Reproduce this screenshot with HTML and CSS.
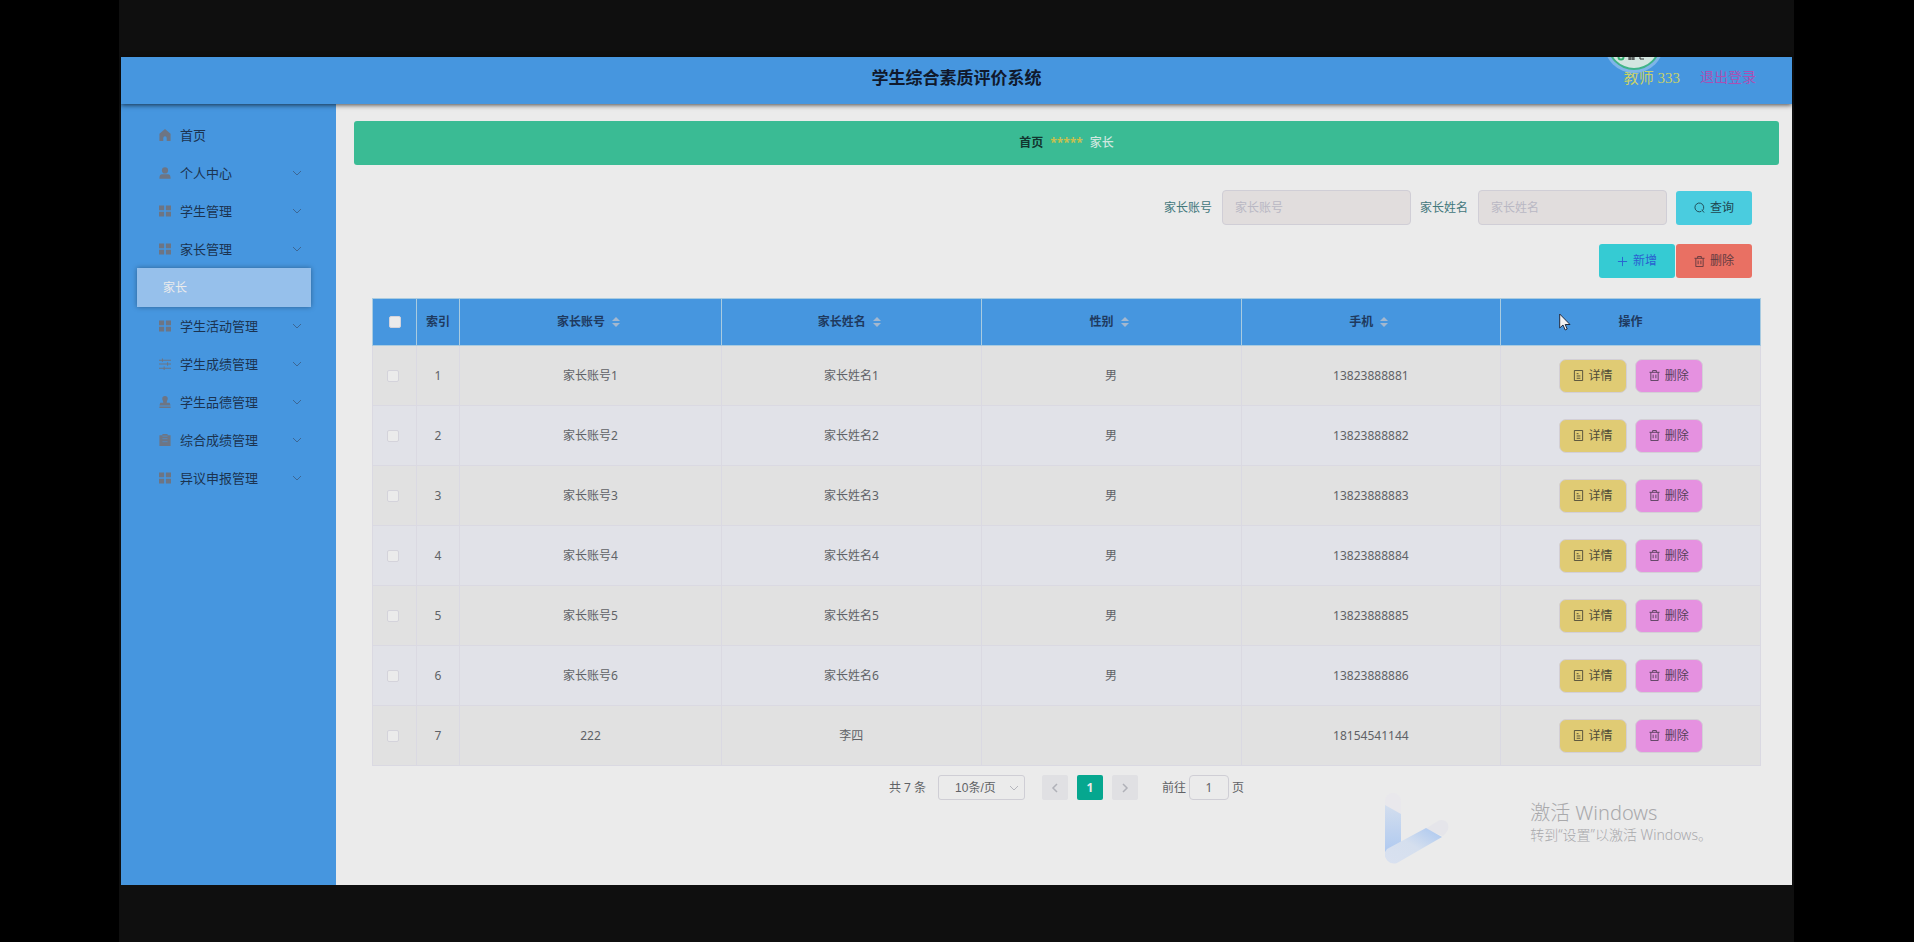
FILE: index.html
```html
<!DOCTYPE html>
<html lang="zh-CN">
<head>
    <meta charset="UTF-8">
    <title>学生综合素质评价系统</title>
    <meta name="viewport" content="width=device-width, initial-scale=1">
    <link rel="stylesheet" href="styles.css">
</head>
<body>
    <svg class="sprite" aria-hidden="true">
        <symbol id="i-home" viewBox="0 0 14 14"><path d="M7 0 .5 5.500V14H5v-3.500a2 2 0 0 1 4 0V14h4.500V5.500z" fill="currentColor"/></symbol>
        <symbol id="i-user" viewBox="0 0 14 14"><circle cx="7" cy="4" r="3.600" fill="currentColor"/><path d="M.5 13c0-3 1-4.500 3-4.500h7c2 0 3 1.500 3 4.500 0 .8-.3.800-.7.800H1.200c-.4 0-.7 0-.7-.8z" fill="currentColor"/></symbol>
        <symbol id="i-menu" viewBox="0 0 14 14"><path d="M0 .5h6v5.500H0zM8 .5h6v5.500H8zM0 8h6v5.500H0zM8 8h6v5.500H8z" fill="currentColor"/></symbol>
        <symbol id="i-oper" viewBox="0 0 14 14"><path d="M0 2.500h14M0 7h14M0 12h14M4 .5v4M10 5v4M6 10v4" stroke="currentColor" stroke-width="1.200" fill="none"/></symbol>
        <symbol id="i-check" viewBox="0 0 14 14"><path d="M7 0a3.200 3.200 0 0 1 3.200 3.200c0 1.500-1.200 2.500-1.200 4.800h3.500l1 3H.5l1-3H5c0-2.300-1.200-3.300-1.200-4.800A3.200 3.200 0 0 1 7 0zM.5 12.300h13V14H.5z" fill="currentColor"/></symbol>
        <symbol id="i-claim" viewBox="0 0 14 14"><path d="M.5 1.500H4V0h6v1.500h3.500V14H.5z" fill="currentColor"/><path d="M4 5.500h6M4 9h6M4 2.500h6" stroke="#4f8cc8" fill="none"/></symbol>
        <symbol id="i-down" viewBox="0 0 10 10"><path d="M1 3l4 4 4-4" stroke="currentColor" fill="none"/></symbol>
        <symbol id="i-left" viewBox="0 0 10 10"><path d="M7 1L3 5l4 4" stroke="currentColor" stroke-width="1.500" fill="none"/></symbol>
        <symbol id="i-right" viewBox="0 0 10 10"><path d="M3 1l4 4-4 4" stroke="currentColor" stroke-width="1.500" fill="none"/></symbol>
        <symbol id="i-search" viewBox="0 0 12 12"><path d="M9.500 9A4.800 4.800 0 1 0 8 10.200M8.500 8.500l2.500 3" stroke="currentColor" fill="none"/></symbol>
        <symbol id="i-plus" viewBox="0 0 12 12"><path d="M6 1v10M1 6h10" stroke="currentColor" fill="none"/></symbol>
        <symbol id="i-del" viewBox="0 0 12 12"><path d="M.5 2.500h11M4 2.500v-2h4v2M2 2.500v9h8v-9M4.500 5v4M7.500 5v4" stroke="currentColor" fill="none"/></symbol>
        <symbol id="i-doc" viewBox="0 0 12 12"><path d="M1.500.5h9v11h-9zM4 4h2M4 6.500h4M4 9h4" stroke="currentColor" fill="none"/></symbol>
        <symbol id="i-sort" viewBox="0 0 8 12"><path d="M4 1l4 4H0zM0 7h8l-4 4z" fill="currentColor"/></symbol>
    </svg>

    <div class="stage">
        <div class="app">
            <header class="header">
                <h1 class="title">学生综合素质评价系统</h1>
                <div class="user">
                    <svg class="avatar" viewBox="0 0 56 18" aria-hidden="true">
                        <circle cx="28" cy="-14" r="30" fill="#7fb5e8"/>
                        <circle cx="28" cy="-14" r="27" fill="#3fb489"/>
                        <circle cx="28" cy="-14" r="25" fill="#d3e6e0"/>
                        <circle cx="15" cy="0" r="2.500" fill="none" stroke="#35b070" stroke-width="2"/>
                        <path d="M22 0h7M22 2h7M24 0v3M27 0v3M34 0v2h4" stroke="#333" fill="none"/>
                    </svg>
                    <span class="user-name">教师 333</span>
                    <a class="logout" href="#">退出登录</a>
                </div>
            </header>

            <div class="body">
                <nav class="sidebar">
                    <ul class="menu">
                        <li><a href="#" class="menu-item"><svg class="menu-icon"><use href="#i-home"/></svg>首页</a></li>
                        <li><a href="#" class="menu-item"><svg class="menu-icon"><use href="#i-user"/></svg>个人中心<svg class="arrow"><use href="#i-down"/></svg></a></li>
                        <li><a href="#" class="menu-item"><svg class="menu-icon"><use href="#i-menu"/></svg>学生管理<svg class="arrow"><use href="#i-down"/></svg></a></li>
                        <li>
                            <a href="#" class="menu-item"><svg class="menu-icon"><use href="#i-menu"/></svg>家长管理<svg class="arrow"><use href="#i-down"/></svg></a>
                            <a href="#" class="submenu-item">家长</a>
                        </li>
                        <li><a href="#" class="menu-item"><svg class="menu-icon"><use href="#i-menu"/></svg>学生活动管理<svg class="arrow"><use href="#i-down"/></svg></a></li>
                        <li><a href="#" class="menu-item"><svg class="menu-icon"><use href="#i-oper"/></svg>学生成绩管理<svg class="arrow"><use href="#i-down"/></svg></a></li>
                        <li><a href="#" class="menu-item"><svg class="menu-icon"><use href="#i-check"/></svg>学生品德管理<svg class="arrow"><use href="#i-down"/></svg></a></li>
                        <li><a href="#" class="menu-item"><svg class="menu-icon"><use href="#i-claim"/></svg>综合成绩管理<svg class="arrow"><use href="#i-down"/></svg></a></li>
                        <li><a href="#" class="menu-item"><svg class="menu-icon"><use href="#i-menu"/></svg>异议申报管理<svg class="arrow"><use href="#i-down"/></svg></a></li>
                    </ul>
                </nav>

                <main class="main">
                    <div class="breadcrumb">
                        <a href="#" class="crumb-home">首页</a>
                        <span class="crumb-sep">*****</span>
                        <span class="crumb-now">家长</span>
                    </div>

                    <div class="content">
                        <form class="search">
                            <label for="account">家长账号</label>
                            <input type="text" id="account" placeholder="家长账号">
                            <label for="name">家长姓名</label>
                            <input type="text" id="name" placeholder="家长姓名">
                            <button type="button" class="btn btn-query"><svg class="icon"><use href="#i-search"/></svg>查询</button>
                        </form>

                        <div class="actions">
                            <button type="button" class="btn btn-add"><svg class="icon"><use href="#i-plus"/></svg>新增</button>
                            <button type="button" class="btn btn-remove"><svg class="icon"><use href="#i-del"/></svg>删除</button>
                        </div>

                        <table class="table">
                            <colgroup>
                                <col class="col-check">
                                <col class="col-index">
                                <col class="col-account">
                                <col><col><col><col>
                            </colgroup>
                            <thead>
                                <tr>
                                    <th><input type="checkbox" aria-label="全选"></th>
                                    <th>索引</th>
                                    <th>家长账号<svg class="sort"><use href="#i-sort"/></svg></th>
                                    <th>家长姓名<svg class="sort"><use href="#i-sort"/></svg></th>
                                    <th>性别<svg class="sort"><use href="#i-sort"/></svg></th>
                                    <th>手机<svg class="sort"><use href="#i-sort"/></svg></th>
                                    <th>操作</th>
                                </tr>
                            </thead>
                            <tbody id="rows"></tbody>
                        </table>

                        <div class="pagination">
                            <span class="total">共 7 条</span>
                            <span class="size">
                                <select aria-label="每页条数"><option>10条/页</option></select>
                                <svg class="arrow"><use href="#i-down"/></svg>
                            </span>
                            <span class="pager">
                                <button type="button" class="page" aria-label="上一页"><svg class="icon-small"><use href="#i-left"/></svg></button>
                                <button type="button" class="page page-active">1</button>
                                <button type="button" class="page" aria-label="下一页"><svg class="icon-small"><use href="#i-right"/></svg></button>
                            </span>
                            <label class="jump">前往<input type="text" value="1">页</label>
                        </div>
                    </div>
                </main>
            </div>

            <div class="watermark">
                <svg class="bird" viewBox="0 0 64 72" aria-hidden="true">
                    <defs>
                        <linearGradient id="g1" x1="0" y1="0" x2="0" y2="1"><stop offset="0" stop-color="#d3deee"/><stop offset="1" stop-color="#adc8f0"/></linearGradient>
                        <linearGradient id="g2" x1="0" y1="1" x2="1" y2="0"><stop offset="0" stop-color="#d9e1f0"/><stop offset=".5" stop-color="#d5dfee"/><stop offset="1" stop-color="#a9c6f0"/></linearGradient>
                    </defs>
                    <path d="M0 12V8a8 8 0 0 1 16 0v14z" fill="#e9e8ec"/>
                    <path d="M0 12l16 9v31L0 62z" fill="url(#g1)"/>
                    <path d="M40 36l13-8c8-4 16 6 5 15z" fill="#e5e5ea"/>
                    <path d="M2 56l39-21 16 9-45 26C4 73-2 64 0 59z" fill="url(#g2)"/>
                </svg>
                <div class="activate">
                    <p class="activate-title">激活 Windows</p>
                    <p class="activate-text">转到“设置”以激活 Windows。</p>
                </div>
            </div>

            <svg class="cursor" viewBox="0 0 12 18" aria-hidden="true"><path d="M.7 1v14l3.300-3 2.200 5 2-1-2-4.500H11z" fill="#f2f2f2" stroke="#222c40"/></svg>
        </div>
    </div>

    <script src="script.js"></script>
</body>
</html>
```
FILE: styles.css
```css
* {
    box-sizing: border-box;
}
body {
    margin: 0;
    background-color: #000;
    font-family: "Noto Sans", "Noto Sans CJK SC", sans-serif;
    font-size: 12px;
    line-height: 18px;
    color: #606266;
}
input, select, button {
    font-family: inherit;
    font-size: inherit;
    line-height: inherit;
}
a {
    text-decoration: none;
}
.sprite {
    display: none;
}
.stage {
    display: flex;
    min-height: 100vh;
    margin: 0 120px 0 119px;
    padding: 57px 2px;
    background-color: #0f0f0f;
}
.app {
    position: relative;
    display: flex;
    flex-direction: column;
    flex: 1;
    background-color: #ebebeb;
}

/* шапка */
.header {
    position: relative;
    z-index: 1;
    display: grid;
    grid-template-columns: 1fr auto 1fr;
    align-items: center;
    height: 47px;
    padding: 0 36px 6px;
    background-color: #4696df;
    box-shadow: 0 1px 5px rgba(0, 0, 0, 0.7);
}
.title {
    grid-column: 2;
    margin: 0;
    font-size: 17px;
    line-height: 24px;
    color: #10192c;
}
.user {
    display: flex;
    justify-content: flex-end;
    align-items: center;
    gap: 20px;
    font-family: "Liberation Serif", "Noto Sans CJK SC", serif;
    font-size: 15px;
}
.user-name {
    color: #c9d268;
}
.logout {
    font-size: 14px;
    color: #ab50b4;
}
.avatar {
    position: absolute;
    top: 0;
    right: 130px;
    width: 56px;
    height: 18px;
}

.body {
    display: flex;
    flex: 1;
}

/* боковое меню */
.sidebar {
    width: 215px;
    padding: 12px 25px 12px 16px;
    background-color: #4696df;
}
.menu {
    margin: 0;
    padding: 0;
    list-style: none;
}
.menu-item {
    display: flex;
    align-items: center;
    height: 38px;
    padding: 0 9px 0 22px;
    font-size: 13px;
    color: #1b3350;
}
.menu-icon {
    width: 12px;
    height: 12px;
    margin-right: 9px;
    color: #6d7584;
}
.arrow {
    width: 10px;
    height: 10px;
    margin-left: auto;
    color: #3c6795;
}
.submenu-item {
    display: flex;
    align-items: center;
    height: 39px;
    padding-left: 26px;
    background-color: #96c0eb;
    color: #ebebeb;
    box-shadow: 0 0 5px rgba(0, 0, 0, 0.35);
}

.main {
    flex: 1;
    min-width: 0;
    padding: 17px 13px 16px 18px;
}
.breadcrumb {
    display: flex;
    justify-content: center;
    align-items: center;
    gap: 7px;
    height: 44px;
    background-color: #3abb94;
    border-radius: 3px;
    font-weight: 500;
}
.crumb-home {
    font-weight: bold;
    color: #12352f;
}
.crumb-sep {
    color: #c9c04f;
    font-weight: bold;
}
.crumb-now {
    color: #cfe6df;
}
.content {
    padding: 25px 18px 0;
}
.search, .actions {
    display: flex;
    justify-content: flex-end;
    align-items: center;
    padding-right: 9px;
}
.search label {
    margin-right: 10px;
    color: #42777b;
}
.search input {
    width: 189px;
    height: 35px;
    margin-right: 9px;
    padding: 0 12px;
    border: 1px solid #d0ced6;
    border-radius: 4px;
    background-color: #e1dddd;
}
.search input::placeholder {
    color: #b9b8c4;
}
.btn {
    display: inline-flex;
    justify-content: center;
    align-items: center;
    gap: 5px;
    height: 34px;
    padding: 0 18px;
    border: none;
    border-radius: 3px;
    cursor: pointer;
}
.icon {
    width: 11px;
    height: 11px;
}
.btn-query {
    background-color: #4accdf;
    color: #1f4650;
}
.actions {
    gap: 1px;
    margin: 19px 0 20px;
}
.btn-add {
    background-color: #35cbd3;
    color: #2a5fd0;
}
.btn-remove {
    background-color: #e97063;
    color: #623a40;
}

/* таблица */
.table {
    width: 100%;
    table-layout: fixed;
    border-collapse: collapse;
    text-align: center;
}
.col-check {
    width: 44px;
}
.col-index {
    width: 43px;
}
.col-account {
    width: 262px;
}
.table th, .table td {
    padding: 0;
    border: 1px solid #dad9e2;
}
.table th {
    height: 47px;
    background-color: #4696df;
    border-color: #a9cbe0;
    color: #1f3a5f;
}
.table td {
    height: 60px;
}
.table td:first-child {
    padding-right: 4px;
}
.table tbody tr {
    background-color: #e1e1e1;
}
.table tbody tr:nth-child(even) {
    background-color: #e1e2e8;
}
.table input {
    appearance: none;
    display: block;
    width: 12px;
    height: 12px;
    margin: 0 auto;
    border: 1px solid #d4d3db;
    border-radius: 2px;
    background-color: #ebebeb;
}
.sort {
    width: 8px;
    height: 12px;
    margin: 0 4px 0 7px;
    vertical-align: -2px;
    color: #a4b8cf;
}
.ops {
    display: flex;
    justify-content: center;
    gap: 8px;
}
.btn-detail, .btn-del {
    padding: 0 13px;
    border: 1px solid #d3cfd6;
    border-radius: 7px;
}
.btn-detail {
    background-color: #e0cb74;
    color: #4f4b38;
}
.btn-del {
    background-color: #e591e0;
    color: #55405a;
}

/* пагинация */
.pagination {
    display: flex;
    justify-content: center;
    align-items: center;
    margin-top: 9px;
}
.size {
    position: relative;
    margin: 0 17px 0 12px;
}
.size select {
    appearance: none;
    display: block;
    width: 87px;
    height: 25px;
    padding: 0 26px 0 16px;
    border: 1px solid #cfced5;
    border-radius: 3px;
    background-color: #ebebeb;
    color: #606266;
    font-family: "Liberation Sans", "Noto Sans CJK SC", sans-serif;
}
.size .arrow {
    position: absolute;
    top: 8px;
    right: 6px;
    color: #b5b6bd;
    pointer-events: none;
}
.pager {
    display: flex;
    gap: 9px;
}
.page {
    width: 26px;
    height: 25px;
    padding: 0;
    border: none;
    border-radius: 2px;
    background-color: #e0e0e3;
    color: #b0b1b8;
}
.page-active {
    background-color: #06a78f;
    color: #ebebeb;
    font-weight: bold;
}
.icon-small {
    width: 10px;
    height: 10px;
    vertical-align: middle;
}
.jump {
    display: flex;
    align-items: center;
    margin-left: 24px;
}
.jump input {
    width: 40px;
    height: 25px;
    margin: 0 3px;
    padding: 0;
    border: 1px solid #cfced5;
    border-radius: 4px;
    background-color: #ebebeb;
    color: #606266;
    text-align: center;
}

/* водяной знак поверх страницы */
.watermark {
    position: absolute;
    right: 80px;
    bottom: 20px;
    display: flex;
    align-items: flex-start;
    gap: 81px;
    pointer-events: none;
}
.bird {
    width: 64px;
    height: 72px;
}
.activate {
    padding-top: 8px;
    font-weight: 300;
    color: #a9a9ab;
}
.activate p {
    margin: 0;
}
.activate-title {
    font-size: 20px;
    line-height: 24px;
}
.activate-text {
    font-size: 14px;
    line-height: 20px;
}
.cursor {
    position: absolute;
    top: 256px;
    right: 221px;
    width: 12px;
    height: 18px;
}
```
FILE: script.js
```js
var parents = [
    ["家长账号1", "家长姓名1", "男", "13823888881"],
    ["家长账号2", "家长姓名2", "男", "13823888882"],
    ["家长账号3", "家长姓名3", "男", "13823888883"],
    ["家长账号4", "家长姓名4", "男", "13823888884"],
    ["家长账号5", "家长姓名5", "男", "13823888885"],
    ["家长账号6", "家长姓名6", "男", "13823888886"],
    ["222", "李四", "", "18154541144"]
];

var html = "";
for (var i = 0; i < parents.length; i++) {
    html += "<tr><td><input type='checkbox' aria-label='选择'></td><td>" + (i + 1) + "</td>";
    for (var j = 0; j < parents[i].length; j++) {
        html += "<td>" + parents[i][j] + "</td>";
    }
    html += "<td><div class='ops'>" +
        "<button type='button' class='btn btn-detail'><svg class='icon'><use href='#i-doc'/></svg>详情</button>" +
        "<button type='button' class='btn btn-del'><svg class='icon'><use href='#i-del'/></svg>删除</button>" +
        "</div></td></tr>";
}
document.getElementById("rows").innerHTML = html;
```
